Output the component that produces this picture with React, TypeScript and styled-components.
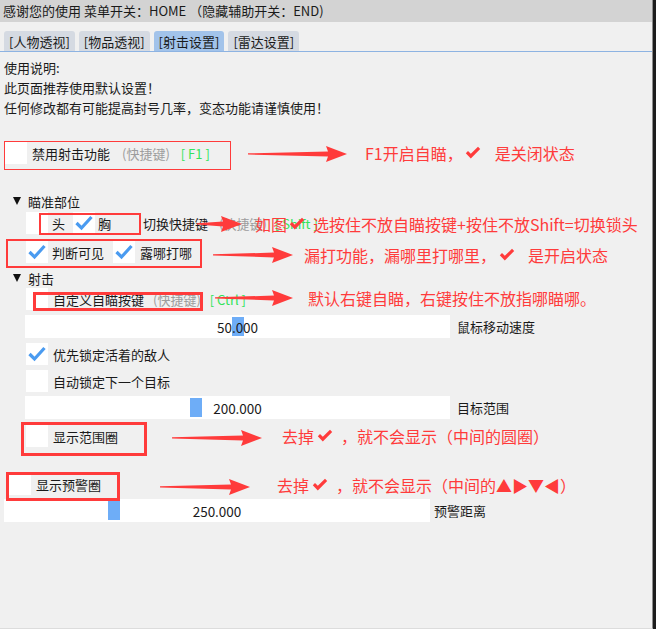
import React from 'react';
import styled, { createGlobalStyle } from 'styled-components';

const RED = '#ff3b3b';
const GREEN = '#33e35a';

const GlobalStyle = createGlobalStyle`
  html, body {
    margin: 0;
    padding: 0;
  }
  body {
    background: #1c1c1c;
    font-family: "Noto Sans CJK SC", "Noto Sans", "DejaVu Sans", sans-serif;
    font-size: 13px;
    color: #1a1a1a;
  }
`;

const Screen = styled.div`
  width: 656px;
  height: 629px;
  display: flex;
  background: #1c1c1c;
  overflow: hidden;
`;

const Window = styled.div`
  position: relative;
  width: 653px;
  height: 629px;
  box-sizing: border-box;
  border-right: 1px solid #8c8c8c;
  border-bottom: 1px solid #dcdcdc;
  background: #f0f0f0;
  display: flex;
  flex-direction: column;
  overflow: hidden;
`;

const TitleBar = styled.div`
  height: 22px;
  line-height: 22px;
  background: #d3d3d3;
  padding-left: 3px;
  white-space: nowrap;
`;

const TabBar = styled.div`
  display: flex;
  gap: 4px;
  padding: 9px 0 0 4px;
  border-bottom: 1px solid #8db3e2;
`;

const Tab = styled.div<{ $active?: boolean }>`
  height: 20px;
  padding: 0 5px;
  display: flex;
  align-items: center;
  border-radius: 3px 3px 0 0;
  background: ${p => (p.$active ? '#a2c3ea' : '#d5dae2')};
  white-space: nowrap;
`;

const Content = styled.div`
  display: flex;
  flex-direction: column;
  padding: 6px 4px 0;
`;

const NoteLine = styled.div`
  line-height: 20px;
  white-space: nowrap;
`;

const Row = styled.div<{ $mt?: number; $indent?: number; $h?: number }>`
  display: flex;
  align-items: center;
  height: ${p => p.$h ?? 22}px;
  margin-top: ${p => p.$mt ?? 0}px;
  padding-left: ${p => p.$indent ?? 0}px;
  white-space: nowrap;
`;

const Box = styled.div`
  width: 22px;
  height: 22px;
  flex: none;
  background: #ffffff;
  display: flex;
  align-items: center;
  justify-content: center;
`;

const Label = styled.span<{ $ml?: number; $mr?: number }>`
  margin-left: ${p => p.$ml ?? 5}px;
  margin-right: ${p => p.$mr ?? 0}px;
`;

const Hint = styled.span<{ $ml?: number }>`
  color: #9d9d9d;
  margin-left: ${p => p.$ml ?? 10}px;
`;

const Key = styled.span<{ $ml?: number }>`
  color: ${GREEN};
  margin-left: ${p => p.$ml ?? 10}px;
`;

const Triangle = styled.span`
  width: 0;
  height: 0;
  border-left: 4px solid transparent;
  border-right: 4px solid transparent;
  border-top: 8px solid #111;
  margin-right: 7px;
`;

const Track = styled.div<{ $w: number }>`
  position: relative;
  width: ${p => p.$w}px;
  height: 23px;
  flex: none;
  background: #ffffff;
  display: flex;
  align-items: center;
  justify-content: center;
`;

const Thumb = styled.div`
  position: absolute;
  top: 2px;
  bottom: 2px;
  width: 12px;
  background: #6eadf7;
`;

const TrackValue = styled.span`
  position: relative;
  font-size: 13.5px;
`;

const Overlay = styled.div`
  position: absolute;
  inset: 0;
  pointer-events: none;
`;

const RedBox = styled.div<{ $x: number; $y: number; $w: number; $h: number; $t?: number }>`
  position: absolute;
  left: ${p => p.$x}px;
  top: ${p => p.$y}px;
  width: ${p => p.$w}px;
  height: ${p => p.$h}px;
  box-sizing: border-box;
  border: ${p => p.$t ?? 2}px solid ${RED};
`;

const ArrowSvg = styled.svg<{ $x: number; $y: number }>`
  position: absolute;
  left: ${p => p.$x}px;
  top: ${p => p.$y - 9}px;
`;

const Note = styled.div<{ $x: number; $y: number }>`
  position: absolute;
  left: ${p => p.$x}px;
  top: ${p => p.$y - 11}px;
  height: 22px;
  display: flex;
  align-items: center;
  font-size: 16px;
  color: ${RED};
  white-space: nowrap;
`;

const TickSvg = styled.svg<{ $ml?: number; $mr?: number }>`
  flex: none;
  margin-left: ${p => p.$ml ?? 2}px;
  margin-right: ${p => p.$mr ?? 2}px;
`;

function BlueCheck() {
  return (
    <svg width="22" height="22" viewBox="0 0 22 22">
      <path d="M3.5 11 L8.5 16 L18.5 5" stroke="#4a9bf0" strokeWidth="3.2" fill="none" />
    </svg>
  );
}

function CheckBox({ checked }: { checked?: boolean }) {
  return <Box>{checked && <BlueCheck />}</Box>;
}

function RedTick({ ml, mr }: { ml?: number; mr?: number }) {
  return (
    <TickSvg width="16" height="14" viewBox="0 0 16 14" $ml={ml} $mr={mr}>
      <path d="M0.8 7.2 L3 5 L5.8 7.8 L13 0.8 L15.2 3 L5.8 12.4 Z" fill={RED} />
    </TickSvg>
  );
}

function Arrow({ from, to, y }: { from: number; to: number; y: number }) {
  const L = to - from;
  const pts = [
    [0, 8.3],
    [L - 19, 6.6],
    [L - 21, 1],
    [L, 9],
    [L - 21, 17],
    [L - 19, 11.4],
    [0, 9.5],
  ]
    .map(p => p.join(','))
    .join(' ');
  return (
    <ArrowSvg $x={from} $y={y} width={L} height={18} viewBox={`0 0 ${L} 18`}>
      <polygon points={pts} fill={RED} />
    </ArrowSvg>
  );
}

function Slider({ value, max, width }: { value: number; max: number; width: number }) {
  const left = (value / max) * (width - 12);
  return (
    <Track $w={width}>
      <Thumb style={{ left }} />
      <TrackValue>{value.toFixed(3)}</TrackValue>
    </Track>
  );
}

const tabs = ['[人物透视]', '[物品透视]', '[射击设置]', '[雷达设置]'];

export default function App() {
  return (
    <>
      <GlobalStyle />
      <Screen>
        <Window>
          <TitleBar>感谢您的使用 菜单开关：HOME （隐藏辅助开关：END)</TitleBar>
          <TabBar>
            {tabs.map((t, i) => (
              <Tab key={t} $active={i === 2}>
                {t}
              </Tab>
            ))}
          </TabBar>
          <Content>
            <NoteLine>使用说明:</NoteLine>
            <NoteLine>此页面推荐使用默认设置！</NoteLine>
            <NoteLine>任何修改都有可能提高封号几率，变态功能请谨慎使用！</NoteLine>

            <Row $mt={24} $indent={1}>
              <CheckBox />
              <Label>禁用射击功能</Label>
              <Hint $ml={12}>(快捷键)</Hint>
              <Key $ml={11}>[ F1 ]</Key>
            </Row>

            <Row $mt={27} $indent={9} $h={20}>
              <Triangle />
              <span>瞄准部位</span>
            </Row>
            <Row $mt={1} $indent={22}>
              <CheckBox />
              <Label $ml={4} $mr={8}>头</Label>
              <CheckBox checked />
              <Label $ml={3}>胸</Label>
              <Label $ml={32}>切换快捷键</Label>
              <Hint $ml={11}>(快捷键)</Hint>
              <Key $ml={8}>[ Shift ]</Key>
            </Row>
            <Row $mt={7} $indent={22}>
              <CheckBox checked />
              <Label $ml={4} $mr={9}>判断可见</Label>
              <CheckBox checked />
              <Label>露哪打哪</Label>
            </Row>

            <Row $mt={5} $indent={9} $h={20}>
              <Triangle />
              <span>射击</span>
            </Row>
            <Row $mt={0} $indent={22}>
              <CheckBox />
              <Label>自定义自瞄按键</Label>
              <Hint $ml={9}>(快捷键)</Hint>
              <Key $ml={9}>[ Ctrl ]</Key>
            </Row>
            <Row $mt={5} $indent={21} $h={23}>
              <Slider value={50} max={100} width={425} />
              <Label $ml={7}>鼠标移动速度</Label>
            </Row>
            <Row $mt={5} $indent={22}>
              <CheckBox checked />
              <Label>优先锁定活着的敌人</Label>
            </Row>
            <Row $mt={5} $indent={22}>
              <CheckBox />
              <Label>自动锁定下一个目标</Label>
            </Row>
            <Row $mt={4} $indent={21} $h={23}>
              <Slider value={200} max={500} width={425} />
              <Label $ml={7}>目标范围</Label>
            </Row>
            <Row $mt={6} $indent={22}>
              <CheckBox />
              <Label>显示范围圈</Label>
            </Row>

            <Row $mt={26} $indent={5}>
              <CheckBox />
              <Label>显示预警圈</Label>
            </Row>
            <Row $mt={4} $indent={0} $h={23}>
              <Slider value={250} max={1000} width={426} />
              <Label $ml={4}>预警距离</Label>
            </Row>
          </Content>

          <Overlay>
            <RedBox $x={4} $y={141} $w={227} $h={29} $t={1.5} />
            <RedBox $x={39} $y={213} $w={102} $h={22} />
            <RedBox $x={6} $y={239} $w={196} $h={29} />
            <RedBox $x={33} $y={292} $w={170} $h={19} $t={3} />
            <RedBox $x={21} $y={422} $w={126} $h={34} $t={3} />
            <RedBox $x={6} $y={472} $w={114} $h={29} $t={3} />

            <Arrow from={248} to={347} y={154} />
            <Arrow from={197} to={242} y={224} />
            <Arrow from={213} to={293} y={255} />
            <Arrow from={215} to={293} y={298} />
            <Arrow from={172} to={262} y={438} />
            <Arrow from={160} to={250} y={487} />

            <Note $x={365} $y={153}>
              F1开启自瞄，
              <RedTick ml={2} mr={14} />
              是关闭状态
            </Note>
            <Note $x={255} $y={224}>
              如图
              <RedTick ml={2} mr={8} />
              选按住不放自瞄按键+按住不放Shift=切换锁头
            </Note>
            <Note $x={304} $y={255}>
              漏打功能，漏哪里打哪里，
              <RedTick ml={3} mr={13} />
              是开启状态
            </Note>
            <Note $x={308} $y={298}>
              默认右键自瞄，右键按住不放指哪瞄哪。
            </Note>
            <Note $x={282} $y={436}>
              去掉
              <RedTick ml={3} mr={8} />
              ，就不会显示（中间的圆圈）
            </Note>
            <Note $x={277} $y={485}>
              去掉
              <RedTick ml={3} mr={8} />
              ，就不会显示（中间的▲▶▼◀）
            </Note>
          </Overlay>
        </Window>
      </Screen>
    </>
  );
}
